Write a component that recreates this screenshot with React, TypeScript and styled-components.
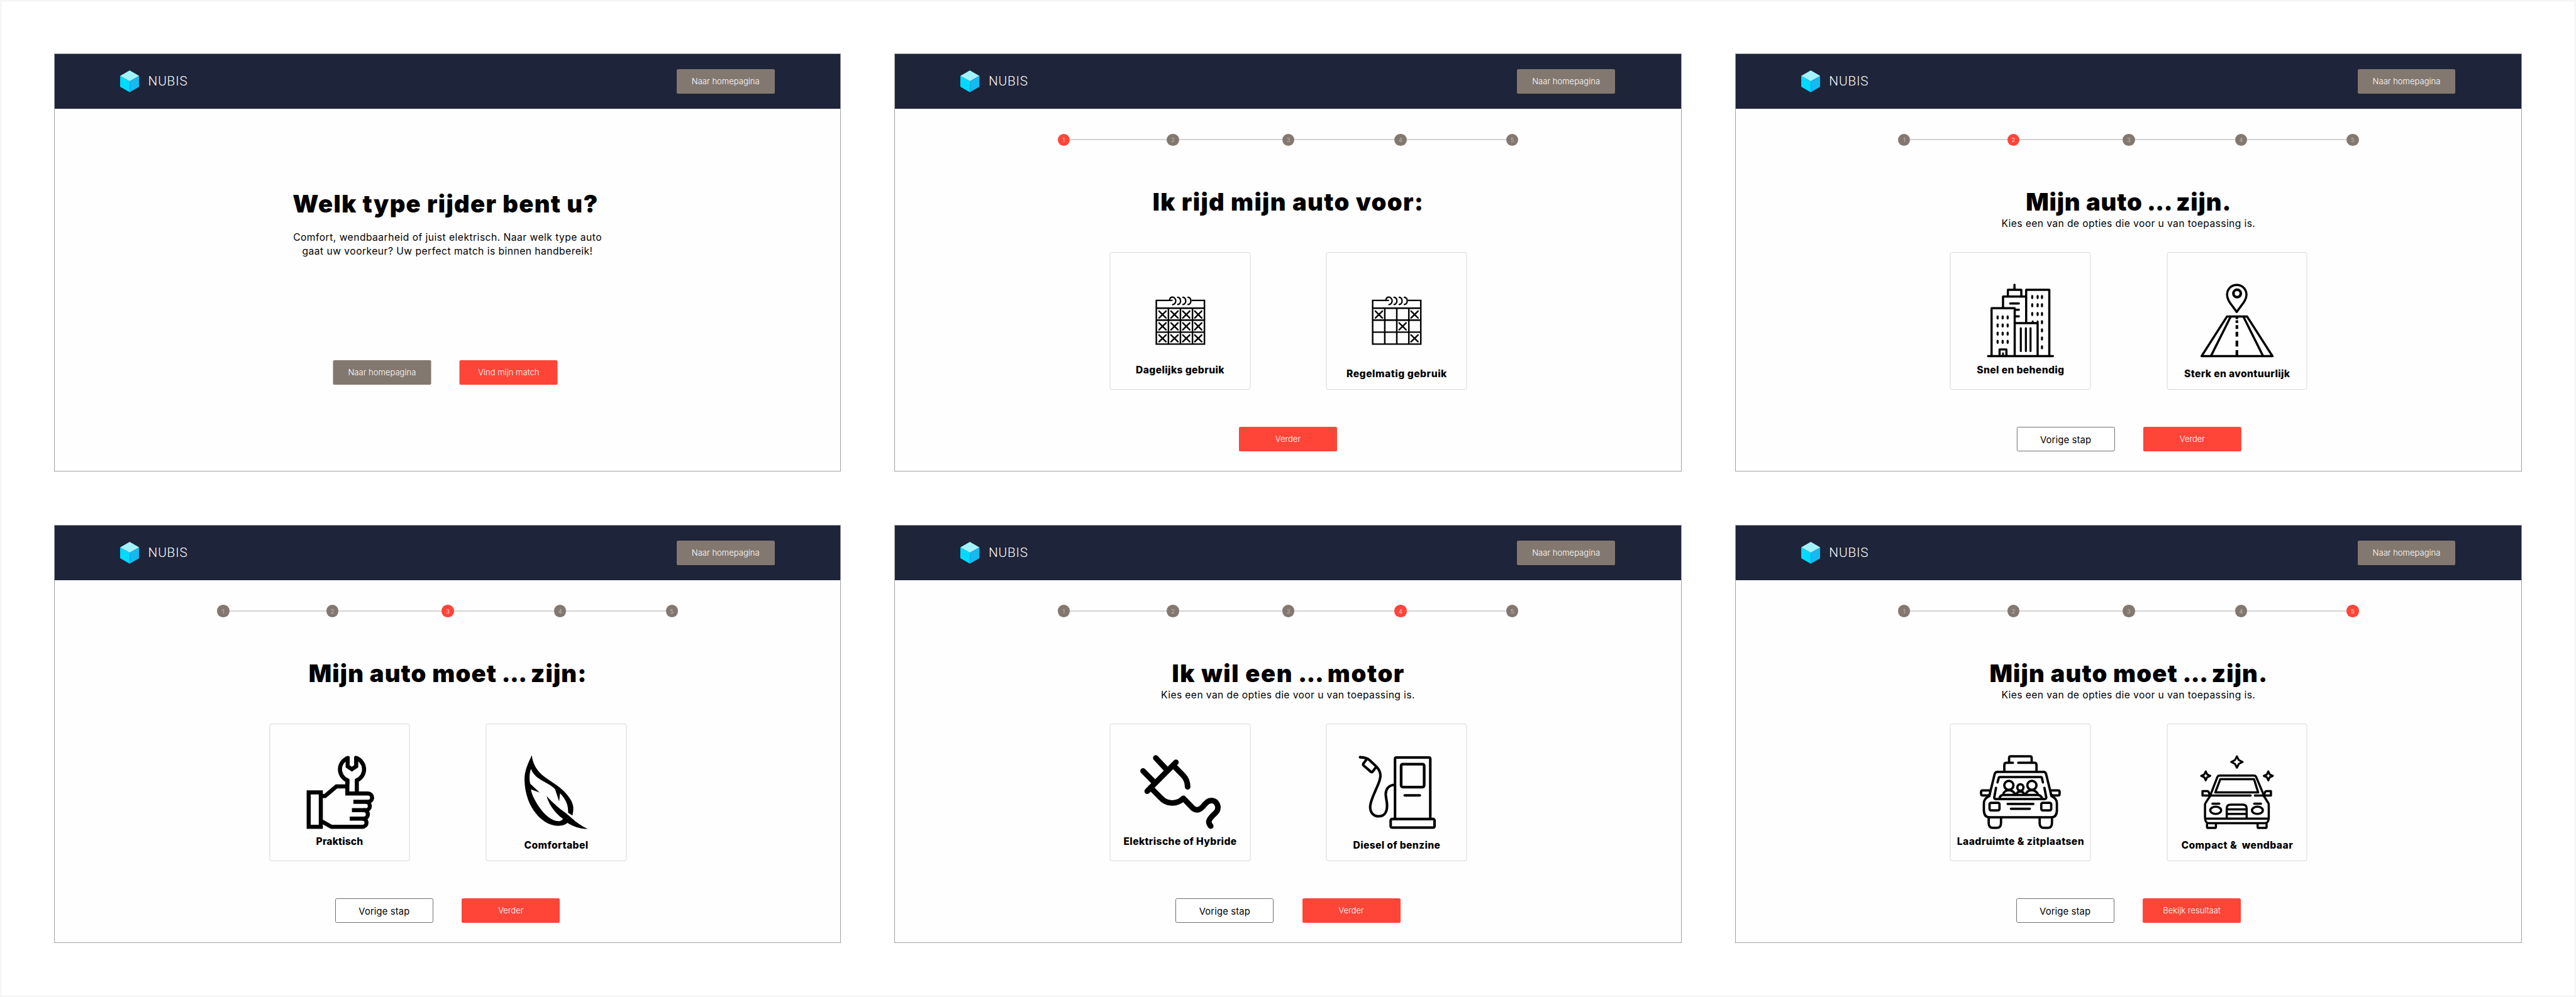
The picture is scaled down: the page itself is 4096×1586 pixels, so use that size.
import React from 'react';
import styled, { createGlobalStyle } from 'styled-components';

/* The board is designed on a 4720px wide artboard and shown in a 4096px window. */
const SCALE = 4096 / 4720;
const u = (n: number) => `${(n * SCALE).toFixed(3)}px`;

const colors = {
  navy: '#1e2439',
  taupe: '#83786f',
  red: '#ff4438',
  line: '#d3d3d3',
};

const GlobalStyle = createGlobalStyle`
  * { box-sizing: border-box; }
  body { margin: 0; background: #fff; overflow: hidden; }
`;

const Board = styled.main`
  width: 4096px;
  height: 1586px;
  overflow: hidden;
  padding: ${u(99.6)} ${u(100)};
  display: grid;
  grid-template-columns: repeat(3, ${u(1440)});
  grid-auto-rows: ${u(764)};
  gap: ${u(100)};
  background: #fff;
  box-shadow: inset 0 0 0 ${u(3)} #f5f5f5;
  font-family: Inter, 'Liberation Sans', sans-serif;
  color: #000;
`;

const Screen = styled.section`
  display: flex;
  flex-direction: column;
  align-items: center;
  background: #fefefe;
  outline: 1px solid #a2a2a5;
`;

const Header = styled.header`
  flex: none;
  width: 100%;
  height: ${u(100)};
  padding: 0 ${u(120.7)} 0 ${u(120)};
  display: flex;
  align-items: center;
  justify-content: space-between;
  background: ${colors.navy};
`;

const Brand = styled.div`
  display: flex;
  align-items: center;
  gap: ${u(16.5)};
`;

const Cube = styled.svg`
  width: ${u(35)};
  height: ${u(40)};
  display: block;
`;

const BrandName = styled.span`
  font-family: Roboto, 'Liberation Sans', sans-serif;
  font-weight: 300;
  font-size: ${u(24)};
  letter-spacing: ${u(0.9)};
  line-height: 1;
  color: #fff;
`;

type ButtonKind = 'neutral' | 'primary' | 'outline';

const Button = styled.button<{ $kind: ButtonKind }>`
  width: ${u(179.6)};
  height: ${u(45)};
  margin: 0;
  padding: ${p => (p.$kind === 'outline' ? `${u(3)} 0 0` : `0 0 ${u(1.5)}`)};
  display: flex;
  align-items: center;
  justify-content: center;
  border: ${p => (p.$kind === 'outline' ? '1px solid #6f6f6f' : '0')};
  border-radius: ${u(3)};
  background: ${p => (p.$kind === 'outline' ? '#fff' : p.$kind === 'primary' ? colors.red : colors.taupe)};
  color: ${p => (p.$kind === 'outline' ? '#000' : '#fff')};
  font-family: inherit;
  font-weight: ${p => (p.$kind === 'outline' ? 400 : 300)};
  font-size: ${p => (p.$kind === 'outline' ? u(17) : u(15))};
  letter-spacing: ${p => (p.$kind === 'outline' ? u(0.18) : u(0.03))};
`;

const Actions = styled.div<{ $top: number; $shift?: number }>`
  display: flex;
  gap: ${u(52.5)};
  margin-top: ${p => u(p.$top)};
  transform: translateX(${p => u(p.$shift ?? 0)});
`;

const Stepper = styled.ol`
  list-style: none;
  margin: ${u(45.5)} 0 0;
  padding: 0;
  display: flex;
  align-items: center;
`;

const Step = styled.li`
  display: flex;
  align-items: center;
`;

const Connector = styled.span<{ $length: number }>`
  width: ${p => u(p.$length)};
  height: 2px;
  background: ${colors.line};
`;

const Dot = styled.span<{ $active: boolean }>`
  width: ${u(22.3)};
  height: ${u(22.3)};
  border-radius: 50%;
  display: flex;
  align-items: center;
  justify-content: center;
  background: ${p => (p.$active ? colors.red : colors.taupe)};
  color: ${p => (p.$active ? '#fff' : 'rgba(255, 255, 255, 0.6)')};
  font-weight: 300;
  font-size: ${u(10.5)};
  line-height: 1;
`;

const Title = styled.h1<{ $top: number; $spacing: number; $shift?: number }>`
  margin: ${p => u(p.$top)} 0 0;
  padding-left: ${p => u(p.$spacing)};
  font-weight: 900;
  font-size: ${u(44)};
  line-height: ${u(52)};
  letter-spacing: ${p => u(p.$spacing)};
  white-space: pre;
  transform: translateX(${p => u(p.$shift ?? 0)});
`;

const Blank = styled.span`
  margin: 0 ${u(-2.8)} 0 ${u(-1.7)};
  letter-spacing: ${u(-1)};
`;

const SubtitleSlot = styled.div`
  height: ${u(65.3)};
  padding-top: ${u(1.3)};
`;

const Subtitle = styled.p`
  margin: 0;
  font-size: ${u(18)};
  line-height: ${u(26)};
  letter-spacing: ${u(0.47)};
`;

const Intro = styled.p`
  margin: ${u(22.5)} 0 0;
  text-align: center;
  font-size: ${u(18)};
  line-height: ${u(25.5)};
  letter-spacing: ${u(0.55)};
`;

const Cards = styled.div`
  display: flex;
  gap: ${u(139.3)};
  transform: translateX(${u(0.6)});
`;

const Card = styled.article`
  width: ${u(257.6)};
  height: ${u(252.4)};
  padding-top: ${u(56)};
  display: flex;
  flex-direction: column;
  align-items: center;
  border: 1px solid #d8d8d8;
  border-radius: ${u(4)};
`;

const CardIcon = styled.svg`
  flex: none;
  display: block;
  width: ${u(180)};
  height: ${u(140)};
  fill: none;
  stroke: #000;
  stroke-linecap: round;
  stroke-linejoin: round;
`;

const CardLabel = styled.h2<{ $top: number; $spacing: number }>`
  margin: ${p => u(p.$top)} 0 0;
  padding-left: ${p => u(p.$spacing)};
  font-weight: 800;
  font-size: ${u(18)};
  line-height: ${u(24)};
  letter-spacing: ${p => u(p.$spacing)};
  white-space: pre;
`;

/* All card drawings share the card's own coordinates. */
const ICON_BOX = '38.8 57 180 140';

const CALENDAR_COLS = [96.4, 118.3, 139.9, 161.8];
const CALENDAR_ROWS = [115, 136.7, 158.7];

const Calendar = ({ marked }: { marked: (col: number, row: number) => boolean }) => (
  <CardIcon viewBox={ICON_BOX} strokeWidth={2.8}>
    <g strokeLinecap="butt" strokeLinejoin="miter">
      <path d="M114.8 89.1H85V169.2H173.2V89.1H149.6" />
      <path d="M85 103.4H173.2M85 125.3H173.2M85 147.3H173.2M107.2 103.4V169M129.2 103.4V169M151.3 103.4V169" />
    </g>
    <path
      strokeWidth={2.6}
      d="M109 89C109.6 85.6 111.8 83.2 114.6 83.2A6 6.8 0 0 1 114.8 96.8M124.3 83.4A6.2 6.7 0 0 1 124.3 96.6M133.8 83.4A6.2 6.7 0 0 1 133.8 96.6M143.2 83.4A6.2 6.7 0 0 1 143.2 96.6"
    />
    {CALENDAR_ROWS.flatMap((y, row) =>
      CALENDAR_COLS.map((x, col) =>
        marked(col, row) ? (
          <path key={`${col}-${row}`} strokeWidth={2.8} d={`M${x - 6.4} ${y - 6.3}l12.8 12.6m0 -12.6l-12.8 12.6`} />
        ) : null,
      ),
    )}
  </CardIcon>
);

const DailyIcon = () => <Calendar marked={() => true} />;
const REGULAR_MARKS = ['0-0', '3-0', '2-1', '3-2'];
const RegularIcon = () => <Calendar marked={(c, r) => REGULAR_MARKS.includes(`${c}-${r}`)} />;

const CityIcon = () => {
  const right = [83, 98, 114].flatMap(y => [150.4, 160.3, 168.3].map(x => [x, y]));
  const rightColumn = [129, 144, 159, 175].map(y => [168.3, y]);
  const left = [120.3, 135, 150, 165].flatMap(y => [87, 96.2, 105.4].map(x => [x, y]));
  return (
    <CardIcon viewBox={ICON_BOX} strokeWidth={4}>
      <path d="M69.6 191.3H188.4M75.9 191V103.3H118.3V191M96.9 103V82H139.3M105.8 82V69.7H130.4V82M117.9 60.5V69M139.3 130V69.7H181.7V191M118.3 130.7H160.3V191" />
      <path d="M110 94.7H125.9M119 106.3H125.9M119 118.3H125.9" />
      <path strokeWidth={3.7} d="M129.5 140V182M138.8 140V182M147.3 140V182" />
      <path d="M90.6 191V179H103.1V191" />
      <path strokeWidth={3.4} d="M96.9 186V191" />
      <path strokeWidth={3.6} d="M151.3 127.6V129M160.3 127.6V129" />
      <path
        strokeWidth={3.8}
        d={[...right, ...rightColumn, ...left].map(([x, y]) => `M${x} ${y - 1.8}v3.6`).join('')}
      />
    </CardIcon>
  );
};

const RoadIcon = () => (
  <CardIcon viewBox={ICON_BOX} strokeWidth={4}>
    <path d="M128.7 60.7C118.6 60.7 111 68.4 111 79C111 89.5 120.5 98 128.7 110.3C136.9 98 146.6 89.5 146.6 79C146.6 68.4 138.8 60.7 128.7 60.7Z" />
    <circle cx="129.4" cy="76.4" r="6.8" strokeWidth={4.8} />
    <path d="M110.9 118.6H147.6L194.2 191.3H64.3Z" />
    <path d="M117.6 119L81.6 190.8M141 119L176.8 190.8" />
    <path strokeLinecap="butt" strokeWidth={4.8} d="M129 119V123.2M129 125.6V130.4M129 134.6V141.4M129 146.6V155.6M129 162.6V173.8M129 180.2V191" />
  </CardIcon>
);

const HandIcon = () => (
  <CardIcon viewBox={ICON_BOX} strokeWidth={7.5}>
    <g strokeLinecap="butt" strokeLinejoin="miter">
      <path d="M72.6 126.7H94.8V189.8H72.6Z" />
      <path d="M96 133.3H102.6L123.4 115.8H143" />
      <path d="M143.4 104.3V128.8H181.2A7.6 7.6 0 0 1 181.2 144H154.5" />
      <path d="M177 144A7.65 7.65 0 0 1 177 159.4H151.8" />
      <path d="M173.4 159.4A7.65 7.65 0 0 1 173.4 174.7H147.8" />
      <path d="M171 174.7A7.3 7.3 0 0 1 171 189.8H114.3L97 180.2" />
      <path d="M144 60.8V79L151.7 84.2L159.6 79V60.8" />
      <path d="M146.5 63.1A21.9 21.9 0 0 0 143.4 104.6V112M157.1 63.1A21.9 21.9 0 0 1 160.8 104.6V126" />
    </g>
  </CardIcon>
);

const FeatherIcon = () => (
  <CardIcon viewBox={ICON_BOX}>
    <path
      fill="#000"
      stroke="none"
      d="M83.9 58.8C76 75 70.5 88 70.5 103C70.5 122 76 142 84.5 155.5C97 176 115 188 132 188C140 188 145.5 186 149 182.7C160 189.5 172 193.8 186.2 193.7C176 189 165.5 182 156.7 173.7C146 163.5 139 160 130 152C122 145 115 138.5 111.2 133.4C113 143 119.5 154 128 163.5C132.5 168.5 136.5 172 141 175.3C138.5 178.5 136 179.4 132 179.4C121 179.4 108 169 98 154.5C90 143 84 131.5 82.1 121.3L98.2 127L80.8 110.5C78.8 101 79.5 91 82.4 83.6C85 91.5 91.5 98.5 100 103.5C110 109.5 120 114 126.5 121L133.9 143.5L135.6 128.5C145 138 151.5 150 150.2 164L158.3 169C159.6 164 160 159 159.8 153.7C158.5 141 147 127 132.1 115.5C121.5 107.5 110.5 102 100.9 93C92.5 85 85.5 74 83.9 58.8Z"
    />
  </CardIcon>
);

const PlugIcon = () => (
  <CardIcon viewBox={ICON_BOX} strokeWidth={10.2}>
    <path d="M84 63.6L103.6 84.5M60.7 87.4L82 109M68.3 124.6L121 71.6M116.5 77.5L134 95.5Q142.3 104 142.4 116.6" />
    <path d="M74.5 118L92.5 136.2C103.5 149 123.5 149.5 134.4 137.5L149 152.5C156 161 163.5 160.5 170.5 152.5L174.5 148C182 138.5 195 139.5 197.8 152.5C198.6 160 195 163 189.5 168C181 176.5 178.5 181 184.8 188.6" />
  </CardIcon>
);

const PumpIcon = () => (
  <CardIcon viewBox={ICON_BOX} strokeWidth={4.7}>
    <rect x="118" y="175.6" width="80.4" height="15.7" rx="2.6" />
    <path d="M126 175V65.4Q126 62.8 128.6 62.8H188Q190.6 62.8 190.6 65.4V175" />
    <rect x="137.2" y="75" width="42.2" height="42" rx="3" strokeWidth={5} />
    <path d="M143.8 132.2H171.4" />
    <path strokeLinecap="butt" d="M126 112.8C114 112.8 108.5 121.5 109 131C109.3 138 111.3 143 111.4 150.5C111.5 163 106.5 170.6 96.4 170.6C86.5 170.6 80 163.5 80.5 152.5C81 143 86.5 132 90.5 122.5C95 112 99.5 104 99.3 95.5C99 88.5 96 83.5 91 78.5L79 67.5C74.5 63.5 68 62.3 61.5 62.3" />
    <path d="M61.8 62.3H62.2M73 67.5L68.2 73.6Q66.8 75.6 68.4 77.4L81.6 88.8Q83.6 90.4 85.2 88.4L90.4 81.6" />
  </CardIcon>
);

const FamilyCarIcon = () => (
  <CardIcon viewBox={ICON_BOX} strokeWidth={4.3}>
    <path d="M108 71V63.6Q108 60.6 111 60.6H146.4Q149.4 60.6 149.4 63.6V71M115 72.4H103.4Q99.3 72.4 99.3 76.4V87M124.8 72.4H154Q158.2 72.4 158.2 76.4V87" />
    <path d="M72.2 131.5L81.6 93Q82.8 89 86.6 89H171Q174.8 89 175.8 93L185.2 131.5" />
    <path d="M86.8 108.4L89.2 99.6Q89.6 98.6 90.8 98.6H166.4Q167.6 98.6 168 99.6L170 108.4" />
    <path d="M84 118.6L80.8 136Q80.8 139 84 139H173Q176.4 139 176.2 136L172.8 118.6" />
    <path d="M90.4 137.6C91.4 133.2 93.6 131.4 97.4 131.4H160C164.4 131.4 167.2 133.2 168.4 137.6" />
    <ellipse cx="107.6" cy="113.8" rx="8.4" ry="8.2" />
    <ellipse cx="149.8" cy="113.8" rx="8.4" ry="8.2" />
    <ellipse cx="128.7" cy="117.8" rx="5.6" ry="5.9" />
    <path d="M97 130.5C98 125.8 102.4 122.8 107.7 122.8S117 125.8 119.2 130.5M121.4 130.5C122.4 127 125 125.2 128.7 125.2S134.8 127 135.8 130.5M138.4 130.5C140 125.8 144.4 122.8 149.7 122.8S159 125.8 161 130.5" />
    <path d="M73 123H59.6Q56.7 123 56.7 126V129.4Q56.7 132.4 59.6 132.4H69Q72 132.4 73 129M184.2 123H197.8Q200.6 123 200.6 126V129.4Q200.6 132.4 197.8 132.4H188.4Q185.4 132.4 184.2 129" />
    <path d="M72 133.4C65 136.5 61.8 141 61.8 147V160Q62.4 172.4 72 172.4H185.4Q195.2 172.4 195.6 160V147C195.6 141 192.4 136.5 185.4 133.4" />
    <rect x="72.2" y="145.8" width="18.2" height="13.8" rx="2.6" />
    <rect x="167" y="145.8" width="18.2" height="13.8" rx="2.6" />
    <path d="M105.4 147.8H152.4M111.4 156.7H146" />
    <path d="M70.6 173V182.5Q70.6 191.6 78 191.6H85.6Q93.2 191.6 93.2 182.5V173M164 173V182.5Q164 191.6 171.4 191.6H179Q186.6 191.6 186.6 182.5V173" />
  </CardIcon>
);

const star = (x: number, y: number, h: number, k: number) =>
  `M${x} ${y - h}L${x + k} ${y - k}L${x + h} ${y}L${x + k} ${y + k}L${x} ${y + h}L${x - k} ${y + k}L${x - h} ${y}L${x - k} ${y - k}Z`;

const CompactCarIcon = () => (
  <CardIcon viewBox={ICON_BOX} strokeWidth={4}>
    <path strokeWidth={3.7} d={star(129, 71, 10.4, 3.5) + star(71.9, 96.4, 8.2, 2.6) + star(186.6, 96.4, 8.2, 2.6)} />
    <path d="M80 133L93.2 98.6Q94.4 95.8 97.4 95.8H160.2Q163.2 95.8 164.4 98.6L178.8 133" />
    <path d="M98.6 102.6H160.4L168 126.8H89.4Z" />
    <path d="M80 132.4H154.3M162 132.4H178.6" />
    <path d="M80 132.4H66V124.3H74.6Q77 124.3 77.8 127.2L79.4 132M178.8 132.4H191.4V124.3H183.4Q181 124.3 180.2 127.2L178.8 132" />
    <path d="M79.8 133.6L71.6 146Q70.6 147.6 70.6 149.6V172C70.6 179.6 72.4 183.2 78 183.2H180C185.6 183.2 187.4 179.6 187.4 172V149.6Q187.4 147.6 186.4 146L178.6 133.6" />
    <path d="M71 174.8H187M74.3 184V190Q74.3 191.9 76.2 191.9H88.6Q90.6 191.9 90.6 190V184M167 184V190Q167 191.9 169 191.9H181.4Q183.4 191.9 183.4 190V184" />
    <ellipse cx="90.2" cy="159.6" rx="10" ry="6.6" />
    <ellipse cx="166.6" cy="159.6" rx="10" ry="6.6" />
    <path d="M84.2 147.4H96.8M160.6 147.4H173.2" />
    <path d="M110.4 174V156Q110.4 149.3 117.6 149.3H139.6Q146.9 149.3 146.9 156V174M111 157.8H146.6M111 166.2H146.6" />
  </CardIcon>
);

const STEP_GAPS = [177.8, 189.2, 183.4, 182.5];

const StepIndicator = ({ active }: { active: number }) => (
  <Stepper>
    {[1, 2, 3, 4, 5].map(n => (
      <Step key={n}>
        {n > 1 && <Connector $length={STEP_GAPS[n - 2]} />}
        <Dot $active={n === active}>{n}</Dot>
      </Step>
    ))}
  </Stepper>
);

const TopBar = () => (
  <Header>
    <Brand>
      <Cube viewBox="0 0 35 40">
        <path fill="#a3f3ff" d="M17.5 0L35 10L17.5 20L0 10Z" />
        <path fill="#00daff" d="M0 10L17.5 20V40L0 30Z" />
        <path fill="#14baf0" d="M35 10L17.5 20V40L35 30Z" />
      </Cube>
      <BrandName>NUBIS</BrandName>
    </Brand>
    <Button $kind="neutral">Naar homepagina</Button>
  </Header>
);

type Option = { label: string; spacing: number; Icon: React.FC };
type Question = {
  title: [string, string?];
  spacing: number;
  subtitle?: boolean;
  options: [Option, Option];
  next: string;
  shift?: number;
};

const QUESTIONS: Question[] = [
  {
    title: ['Ik rijd mijn auto voor:'],
    spacing: 1.58,
    options: [
      { label: 'Dagelijks gebruik', spacing: 0.46, Icon: DailyIcon },
      { label: 'Regelmatig gebruik', spacing: 0.62, Icon: RegularIcon },
    ],
    next: 'Verder',
  },
  {
    title: ['Mijn auto', 'zijn.'],
    spacing: 1,
    subtitle: true,
    options: [
      { label: 'Snel en behendig', spacing: 0.44, Icon: CityIcon },
      { label: 'Sterk en avontuurlijk', spacing: 0.43, Icon: RoadIcon },
    ],
    next: 'Verder',
    shift: 1,
  },
  {
    title: ['Mijn auto moet', 'zijn:'],
    spacing: 1.3,
    options: [
      { label: 'Praktisch', spacing: 0.17, Icon: HandIcon },
      { label: 'Comfortabel', spacing: 0.5, Icon: FeatherIcon },
    ],
    next: 'Verder',
  },
  {
    title: ['Ik wil een', 'motor'],
    spacing: 1.85,
    subtitle: true,
    options: [
      { label: 'Elektrische of Hybride', spacing: 0.43, Icon: PlugIcon },
      { label: 'Diesel of benzine', spacing: 0.4, Icon: PumpIcon },
    ],
    next: 'Verder',
  },
  {
    title: ['Mijn auto moet', 'zijn.'],
    spacing: 1.3,
    subtitle: true,
    options: [
      { label: 'Laadruimte & zitplaatsen', spacing: 0.52, Icon: FamilyCarIcon },
      { label: 'Compact &  wendbaar', spacing: 0.55, Icon: CompactCarIcon },
    ],
    next: 'Bekijk resultaat',
  },
];

const LABEL_TOPS = [8.2, 15.5];

const QuestionScreen = ({ q, step }: { q: Question; step: number }) => (
  <Screen>
    <TopBar />
    <StepIndicator active={step} />
    <Title $top={77.2} $spacing={q.spacing}>
      {q.title[0]}
      {q.title[1] && (
        <>
          {' '}
          <Blank>...</Blank> {q.title[1]}
        </>
      )}
    </Title>
    <SubtitleSlot>
      {q.subtitle && <Subtitle>Kies een van de opties die voor u van toepassing is.</Subtitle>}
    </SubtitleSlot>
    <Cards>
      {q.options.map(({ label, spacing, Icon }, i) => (
        <Card key={label}>
          <Icon />
          <CardLabel $top={LABEL_TOPS[i]} $spacing={spacing}>
            {label}
          </CardLabel>
        </Card>
      ))}
    </Cards>
    <Actions $top={68.6} $shift={q.shift}>
      {step > 1 && <Button $kind="outline">Vorige stap</Button>}
      <Button $kind="primary">{q.next}</Button>
    </Actions>
  </Screen>
);

export default function App() {
  return (
    <>
      <GlobalStyle />
      <Board>
        <Screen>
          <TopBar />
          <Title $top={149} $spacing={1.52} $shift={-4.3}>
            Welk type rijder bent u?
          </Title>
          <Intro>
            Comfort, wendbaarheid of juist elektrisch. Naar welk type auto
            <br />
            gaat uw voorkeur? Uw perfect match is binnen handbereik!
          </Intro>
          <Actions $top={186.5} $shift={-4}>
            <Button $kind="neutral">Naar homepagina</Button>
            <Button $kind="primary">Vind mijn match</Button>
          </Actions>
        </Screen>
        {QUESTIONS.map((q, i) => (
          <QuestionScreen key={i} q={q} step={i + 1} />
        ))}
      </Board>
    </>
  );
}
